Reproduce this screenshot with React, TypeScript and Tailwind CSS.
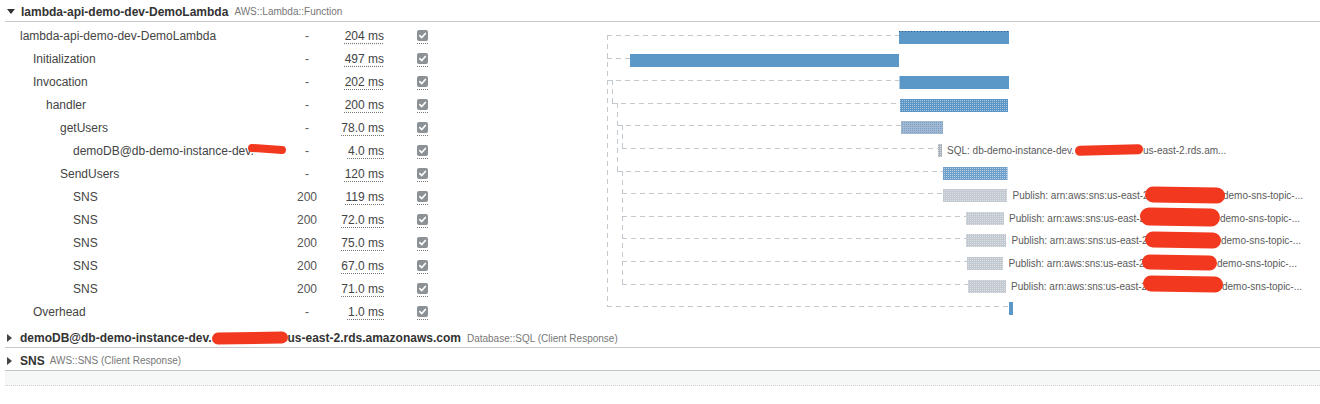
import React from "react";

type Row = { name: string; lvl: number; st: string; dur: string; redact?: boolean };

const rows: Row[] = [
  { name: "lambda-api-demo-dev-DemoLambda", lvl: 0, st: "-", dur: "204 ms" },
  { name: "Initialization", lvl: 1, st: "-", dur: "497 ms" },
  { name: "Invocation", lvl: 1, st: "-", dur: "202 ms" },
  { name: "handler", lvl: 2, st: "-", dur: "200 ms" },
  { name: "getUsers", lvl: 3, st: "-", dur: "78.0 ms" },
  { name: "demoDB@db-demo-instance-dev.", lvl: 4, st: "-", dur: "4.0 ms", redact: true },
  { name: "SendUsers", lvl: 3, st: "-", dur: "120 ms" },
  { name: "SNS", lvl: 4, st: "200", dur: "119 ms" },
  { name: "SNS", lvl: 4, st: "200", dur: "72.0 ms" },
  { name: "SNS", lvl: 4, st: "200", dur: "75.0 ms" },
  { name: "SNS", lvl: 4, st: "200", dur: "67.0 ms" },
  { name: "SNS", lvl: 4, st: "200", dur: "71.0 ms" },
  { name: "Overhead", lvl: 1, st: "-", dur: "1.0 ms" },
];

const pads = ["pl-[15px]", "pl-[28px]", "pl-[41px]", "pl-[55px]", "pl-[68px]"];

const ly = (i: number) => 35 + i * 22.6;

type Bar = { x1: number; x2: number; fill: string };
const bars: Bar[] = [
  { x1: 899, x2: 1009, fill: "#5b97c7" },
  { x1: 630, x2: 899, fill: "#5b97c7" },
  { x1: 899.5, x2: 1009, fill: "#5b97c7" },
  { x1: 900, x2: 1008, fill: "url(#pBlue)" },
  { x1: 901, x2: 943, fill: "url(#pLight)" },
  { x1: 938, x2: 942, fill: "url(#pGray2)" },
  { x1: 943, x2: 1007.5, fill: "url(#pMid)" },
  { x1: 943, x2: 1007, fill: "url(#pGray)" },
  { x1: 966, x2: 1004, fill: "url(#pGray)" },
  { x1: 966, x2: 1006, fill: "url(#pGray)" },
  { x1: 967, x2: 1003, fill: "url(#pGray)" },
  { x1: 968, x2: 1006, fill: "url(#pGray)" },
  { x1: 1009, x2: 1013, fill: "#5b97c7" },
];

const hLines: [number, number, number][] = [
  [607, 899, 0],
  [607, 630, 1],
  [607, 899, 2],
  [612, 900, 3],
  [617, 901, 4],
  [622, 938, 5],
  [617, 943, 6],
  [622, 943, 7],
  [622, 966, 8],
  [622, 966, 9],
  [622, 967, 10],
  [622, 968, 11],
  [607, 1009, 12],
];
const vLines: [number, number, number][] = [
  [607, 0, 12],
  [612, 2, 3],
  [617, 3, 6],
  [622, 4, 5],
  [622, 6, 11],
];

const pubLabels: { x: number; row: number; bx1: number; bx2: number; by: number; bh: number; sx: number }[] = [
  { x: 1012.5, row: 7, bx1: 1145, bx2: 1225, by: 187, bh: 16, sx: 1223 },
  { x: 1009, row: 8, bx1: 1140, bx2: 1220, by: 208, bh: 18, sx: 1220 },
  { x: 1011.5, row: 9, bx1: 1145, bx2: 1221, by: 232, bh: 16, sx: 1221 },
  { x: 1008.5, row: 10, bx1: 1142, bx2: 1217, by: 255, bh: 15, sx: 1217 },
  { x: 1011, row: 11, bx1: 1143, bx2: 1223, by: 276, bh: 16, sx: 1222 },
];

function Check() {
  return (
    <span className="inline-flex flex-col items-center">
      <svg width="11" height="11" viewBox="0 0 11 11">
        <rect x="0" y="0" width="11" height="11" rx="2" fill="#8c9196" />
        <path d="M2.8 5.6 L4.8 7.6 L8.4 3.4" stroke="#fff" strokeWidth="1.6" fill="none" strokeLinecap="round" strokeLinejoin="round" />
      </svg>
      <span className="mt-[2px] w-[11px] border-b border-dotted border-[#777]" />
    </span>
  );
}

function Timeline() {
  return (
    <svg
      className="absolute top-0 left-0 pointer-events-none"
      width="1320"
      height="330"
      viewBox="0 0 1320 330"
      style={{ fontFamily: "'Liberation Sans', Arial, sans-serif" }}
    >
      <defs>
        <pattern id="pBlue" width="2" height="2" patternUnits="userSpaceOnUse">
          <rect width="2" height="2" fill="#5b96c6" />
          <rect width="1" height="1" fill="#a6c5e0" />
        </pattern>
        <pattern id="pMid" width="2" height="2" patternUnits="userSpaceOnUse">
          <rect width="2" height="2" fill="#6fa0cc" />
          <rect width="1" height="1" fill="#b5cde3" />
        </pattern>
        <pattern id="pLight" width="2" height="2" patternUnits="userSpaceOnUse">
          <rect width="2" height="2" fill="#a3b9d1" />
          <rect width="1" height="1" fill="#779fc7" />
        </pattern>
        <pattern id="pGray" width="2" height="2" patternUnits="userSpaceOnUse">
          <rect width="2" height="2" fill="#c3c9d1" />
          <rect width="1" height="1" fill="#dde1e6" />
        </pattern>
        <pattern id="pGray2" width="2" height="2" patternUnits="userSpaceOnUse">
          <rect width="2" height="2" fill="#aab1ba" />
          <rect width="1" height="1" fill="#d4d8dd" />
        </pattern>
      </defs>
      <g stroke="#c2c8cf" strokeWidth="1" strokeDasharray="5 4" fill="none">
        {hLines.map(([x1, x2, r], i) => (
          <line key={"h" + i} x1={x1} x2={x2} y1={Math.round(ly(r)) + 0.5} y2={Math.round(ly(r)) + 0.5} />
        ))}
        {vLines.map(([x, r1, r2], i) => (
          <line key={"v" + i} x1={x + 0.5} x2={x + 0.5} y1={Math.round(ly(r1))} y2={Math.round(ly(r2))} />
        ))}
      </g>
      {bars.map((b, i) => (
        <rect key={"b" + i} x={b.x1} y={Math.round(ly(i)) - 4} width={b.x2 - b.x1} height={13} fill={b.fill} />
      ))}
      <line x1={899} x2={1009} y1={31.5} y2={31.5} stroke="#2f5f86" strokeDasharray="1 2" />
      <text x={947} y={Math.round(ly(5)) + 6} fontSize="10" fill="#5a5a5a">
        SQL: db-demo-instance-dev.
      </text>
      <text x={1143} y={Math.round(ly(5)) + 6} fontSize="10" fill="#5a5a5a">
        us-east-2.rds.am...
      </text>
      <rect x={1075} y={145} width={68} height={10} rx={5} fill="#f2391f" transform="rotate(-1.5 1109 150)" />
      {pubLabels.map((p, i) => (
        <g key={"p" + i}>
          <text x={p.x} y={Math.round(ly(p.row)) + 6} fontSize="10" fill="#5a5a5a">
            Publish: arn:aws:sns:us-east-2
          </text>
          <text x={p.sx} y={Math.round(ly(p.row)) + 6} fontSize="10" fill="#5a5a5a">
            demo-sns-topic-...
          </text>
          <rect x={p.bx1} y={p.by} width={p.bx2 - p.bx1} height={p.bh} rx={p.bh / 2} fill="#f2391f" transform={`rotate(1 ${(p.bx1 + p.bx2) / 2} ${p.by + p.bh / 2})`} />
        </g>
      ))}
    </svg>
  );
}

export default function App() {
  return (
    <div className="relative w-[1320px] h-[404px] overflow-hidden bg-white text-[#444] font-['Liberation_Sans',Arial,sans-serif]">
      <div className="ml-[5px]">
        {/* header */}
        <div className="flex items-center h-[22px] pt-[2px] border-b border-[#cacaca]">
          <svg width="8" height="5" viewBox="0 0 8 5" className="ml-[2px]">
            <polygon points="0,0 8,0 4,5" fill="#333" />
          </svg>
          <span className="ml-[6px] text-[12px] font-bold text-[#333]">lambda-api-demo-dev-DemoLambda</span>
          <span className="ml-[6px] text-[10px] text-[#777]">AWS::Lambda::Function</span>
        </div>
        {/* rows */}
        <div className="pt-[2px] pb-[3px]">
          {rows.map((r, i) => (
            <div key={i} className="flex items-center h-[23px] text-[12px]">
              <div className={`w-[284px] flex items-center ${pads[r.lvl]}`}>
                <span>{r.name}</span>
                {r.redact && (
                  <span className="inline-block ml-[-6px] w-[38px] h-[8px] rounded-full bg-[#f2391f] rotate-[4deg] -translate-y-[2px]" />
                )}
              </div>
              <div className="w-[36px] text-center text-[#555]">{r.st}</div>
              <div className="w-[59px] text-right">
                <span className="underline decoration-dotted decoration-[#777] underline-offset-[3px]">{r.dur}</span>
              </div>
              <div className="w-[77px] flex justify-center pt-[2px]">
                <Check />
              </div>
            </div>
          ))}
        </div>
        {/* section demoDB */}
        <div className="flex items-center h-[22px] pt-[3px] border-b border-[#c8c8c8] text-[12px]">
          <svg width="5" height="8" viewBox="0 0 5 8" className="ml-[2px]">
            <polygon points="0,0 5,4 0,8" fill="#444" />
          </svg>
          <span className="ml-[8px] font-bold text-[#333]">demoDB@db-demo-instance-dev.</span>
          <span className="inline-block w-[76px] h-[12px] rounded-full bg-[#f2391f] -rotate-1" />
          <span className="font-bold text-[#333]">us-east-2.rds.amazonaws.com</span>
          <span className="ml-[6px] text-[10px] text-[#777]">Database::SQL (Client Response)</span>
        </div>
        {/* section SNS */}
        <div className="flex items-center h-[23px] pt-[3px] border-b border-[#c4c4c4] text-[12px]">
          <svg width="5" height="8" viewBox="0 0 5 8" className="ml-[2px]">
            <polygon points="0,0 5,4 0,8" fill="#444" />
          </svg>
          <span className="ml-[8px] font-bold text-[#333]">SNS</span>
          <span className="ml-[5px] text-[10px] text-[#777]">AWS::SNS (Client Response)</span>
        </div>
        <div className="h-[15px] bg-[#f6f7f7] border-b border-dotted border-[#d0d0d0]" />
      </div>
      <Timeline />
    </div>
  );
}
